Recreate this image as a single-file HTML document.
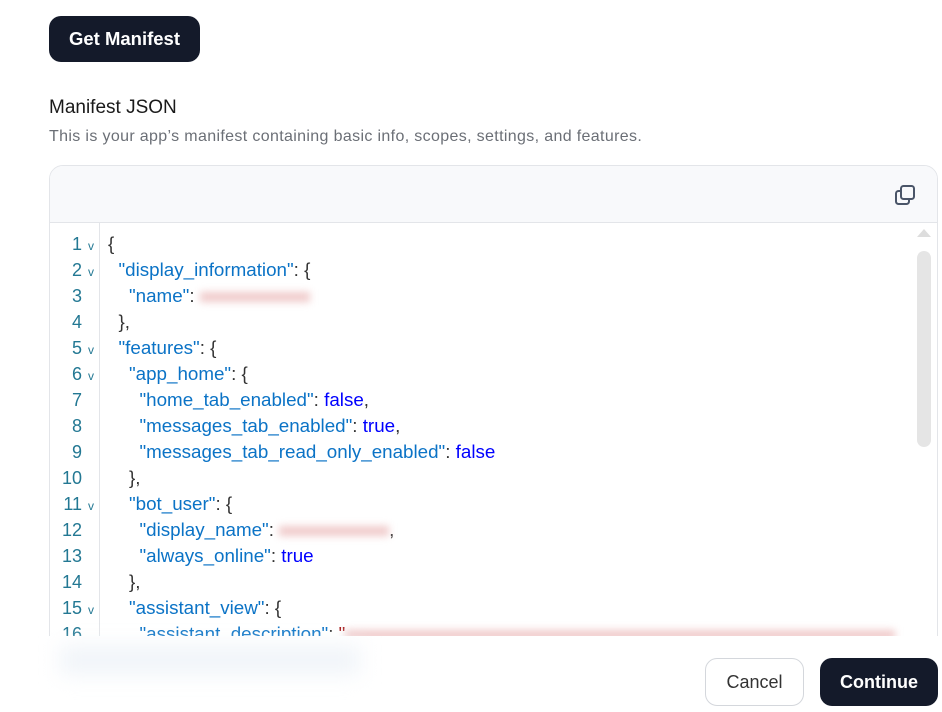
<!DOCTYPE html>
<html><head><style>
html,body{margin:0;width:942px;height:712px;overflow:hidden}
body{background:#fff;font-family:"Liberation Sans",sans-serif;position:relative}
.btn{position:absolute;border-radius:12px;font-size:18px;font-weight:bold;display:flex;align-items:center;justify-content:center}
.box{position:absolute;left:49px;top:165px;width:887px;height:540px;border:1px solid #e3e5e9;border-radius:14px;overflow:hidden}
.hdr{height:56px;background:#f8f9fb;border-bottom:1px solid #e3e5e9;position:relative}
.gut{position:absolute;left:0;top:57px;width:49px;height:600px;border-right:1px solid #e3e5e9}
.ln{position:absolute;font-size:18.8px;line-height:26px;white-space:pre;color:#333}
.num{position:absolute;width:32px;text-align:right;color:#237893;font-size:18px;line-height:26px}
.ch{position:absolute;left:38px;color:#237893;font-size:12px}
.k{color:#0b73c6}.b{color:#0000ff}.s{color:#a31515}
.bl{display:inline-block;height:10px;background:#f0caca;filter:blur(4px);vertical-align:middle}
</style></head><body>
<div class="btn" style="left:49px;top:16px;width:151px;height:46px;background:#141a2a;color:#fff;font-size:18.5px">Get Manifest</div>
<div style="position:absolute;left:49px;top:97px;font-size:19px;color:#1a1a1a">Manifest JSON</div>
<div style="position:absolute;left:49px;top:128px;font-size:16px;letter-spacing:0.35px;color:#6b6f76">This is your app’s manifest containing basic info, scopes, settings, and features.</div>
<div class="box">
<div class="hdr"><svg style="position:absolute;right:20px;top:17px" width="24" height="24" viewBox="0 0 24 24" fill="none" stroke="#4a5568" stroke-width="2"><rect x="8" y="3" width="13" height="13" rx="2.5"/><path d="M8 8H5.5A2.5 2.5 0 0 0 3 10.5v8A2.5 2.5 0 0 0 5.5 21h8a2.5 2.5 0 0 0 2.5-2.5V16"/></svg></div>
<div class="gut"></div>
<div style="position:absolute;right:6px;top:63px;width:0;height:0;border-left:7px solid transparent;border-right:7px solid transparent;border-bottom:8px solid #ddd"></div>
<div style="position:absolute;right:6px;top:85px;width:14px;height:196px;background:#e5e5e5;border-radius:7px"></div>
<div id="code"></div>
</div>
<div style="position:absolute;left:0;top:636px;width:942px;height:76px;background:#fff"></div>
<div style="position:absolute;left:60px;top:645px;width:300px;height:30px;background:#f1f5f9;filter:blur(10px)"></div>
<div class="btn" style="left:705px;top:658px;width:97px;height:46px;border:1px solid #d4d7dc;color:#333;font-weight:normal;background:#fff">Cancel</div>
<div class="btn" style="left:820px;top:658px;width:118px;height:48px;background:#141a2a;color:#fff">Continue</div>
<script>
var L=[
[1,1,0,'{'],
[2,1,1,'<span class="k">"display_information"</span>: {'],
[3,0,2,'<span class="k">"name"</span>: <span class="bl" style="width:110px"></span>'],
[4,0,1,'},'],
[5,1,1,'<span class="k">"features"</span>: {'],
[6,1,2,'<span class="k">"app_home"</span>: {'],
[7,0,3,'<span class="k">"home_tab_enabled"</span>: <span class="b">false</span>,'],
[8,0,3,'<span class="k">"messages_tab_enabled"</span>: <span class="b">true</span>,'],
[9,0,3,'<span class="k">"messages_tab_read_only_enabled"</span>: <span class="b">false</span>'],
[10,0,2,'},'],
[11,1,2,'<span class="k">"bot_user"</span>: {'],
[12,0,3,'<span class="k">"display_name"</span>: <span class="bl" style="width:110px"></span>,'],
[13,0,3,'<span class="k">"always_online"</span>: <span class="b">true</span>'],
[14,0,2,'},'],
[15,1,2,'<span class="k">"assistant_view"</span>: {'],
[16,0,3,'<span class="k">"assistant_description"</span>: <span class="s">"</span><span class="bl" style="width:550px"></span>']];
var h='';L.forEach(function(r,i){var y=57+8+i*26;
h+='<div class="num" style="top:'+y+'px">'+r[0]+'</div>';
if(r[1])h+='<div class="ch" style="top:'+(y+8)+'px">v</div>';
h+='<div class="ln" style="left:'+(58+r[2]*10.5)+'px;top:'+y+'px">'+r[3]+'</div>';});
document.getElementById('code').innerHTML=h;
</script>
</body></html>
